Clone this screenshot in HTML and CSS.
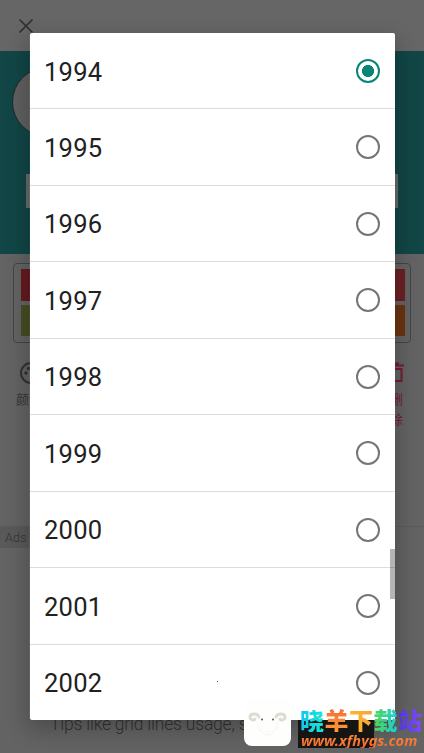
FILE: index.html
```
<!DOCTYPE html>
<html lang="zh">
<head>
<meta charset="utf-8">
<title>Year</title>
<link rel="stylesheet" href="styles.css">
</head>
<body>
<div class="screen">
  <main class="page">
    <header class="topbar">
      <svg class="close" viewBox="0 0 16 16"><path d="M1.500 1.500l13 13M14.500 1.500l-13 13"/></svg>
    </header>
    <section class="hero"><div class="avatar"></div><div class="field"></div></section>
    <section class="palette">
      <div class="swatch red"></div><div class="swatch crimson"></div>
      <div class="swatch olive"></div><div class="swatch brown"></div>
    </section>
    <nav class="tools">
      <div class="tool">
        <svg class="icon" viewBox="0 0 24 24"><path d="M12 2a10 10 0 0 0 0 20c2 0 3-1.500 2-3s0-3 2-3h3c2 0 3-2 3-4 0-6-5-10-10-10z"/><circle cx="7" cy="12" r=".8"/><circle cx="9.500" cy="7.500" r=".8"/><circle cx="15" cy="7.500" r=".8"/></svg>
        <span>颜色</span>
      </div>
      <div class="tool delete">
        <svg class="icon" viewBox="0 0 24 24"><path d="M1 4.500h17M4 2.500h9M3 8h12.500v12H3z"/></svg>
        <span>删<br>除</span>
      </div>
    </nav>
    <div class="ads">Ads</div>
    <p class="tips">Tips like grid lines usage, s</p>
  </main>

  <div class="dialog">
    <ul class="years">
      <li><span>1994</span><i class="radio on"></i></li>
      <li><span>1995</span><i class="radio"></i></li>
      <li><span>1996</span><i class="radio"></i></li>
      <li><span>1997</span><i class="radio"></i></li>
      <li><span>1998</span><i class="radio"></i></li>
      <li><span>1999</span><i class="radio"></i></li>
      <li><span>2000</span><i class="radio"></i></li>
      <li><span>2001</span><i class="radio"></i></li>
      <li><span>2002</span><i class="radio"></i></li>
    </ul>
    <div class="scrollbar"></div>
    <div class="speck"></div>
  </div>

  <div class="watermark">
    <svg class="sheep" viewBox="0 0 47 47">
      <rect width="47" height="47" rx="8" fill="#fefefd"/>
      <path d="M15 18c-1-4-9-4-9 0 0 3 4 4 5 2M32 18c1-4 9-4 9 0 0 3-4 4-5 2" fill="none" stroke="#dedbd2" stroke-width="2.800" stroke-linecap="round"/>
      <path d="M13 23c1 6 4 12 10 13 7-1 10-7 11-13M21 32l2.500 2 2.500-2" fill="none" stroke="#f2f1ed" stroke-width=".8"/>
      <circle cx="18" cy="20.500" r="1" fill="#555"/><circle cx="29" cy="20.500" r="1" fill="#555"/>
    </svg>
    <div class="brand">
      <div class="name"><b class="c1">晓</b><b class="c2">羊</b><b class="c3">下</b><b class="c4">载</b><b class="c5">站</b></div>
      <div class="site">www.xfhygs.com</div>
    </div>
  </div>
</div>
</body>
</html>
```

FILE: styles.css
```
* { box-sizing: border-box; }
body { margin: 0; font-family: Roboto, "Noto Sans CJK SC", sans-serif; }
.screen { position: relative; width: 424px; height: 753px; overflow: hidden; background: #636363; }
.page { display: flex; flex-direction: column; height: 753px; }
.topbar { height: 51px; padding: 18px 0 0 18px; background: #666; flex: none; }
.close { display: block; width: 16px; height: 16px; fill: none; stroke: #303030; stroke-width: 1.7; }
.hero { height: 203px; flex: none; padding: 16px 26px 0 12px; background: #124646; }
.avatar { width: 70px; height: 70px; border: 1px solid #202a2a; border-radius: 50%; background: #606060; }
.field { height: 34px; margin: 37px 0 0 14px; background: #626a6a; border: 1px solid #6c6c6c; }
.palette { display: grid; grid-template-columns: 1fr 1fr; grid-template-rows: 32px 31px; row-gap: 4px; height: 80px; flex: none; margin: 9px 13px 0; padding: 5px 5px 0 7px; border: 1px solid #424548; border-radius: 4px; }
.red { background: #641a20; }
.crimson { background: #6b2023; }
.olive { background: #464d24; }
.brown { background: #6a3410; }
.tools { display: flex; justify-content: space-between; height: 183px; flex: none; padding: 18px 13px 0 15px; }
.tool { display: flex; flex-direction: column; align-items: center; width: 28px; font-size: 13px; line-height: 20px; color: #363636; }
.delete { color: #751d31; width: 26px; }
.icon { width: 24px; height: 24px; fill: none; stroke: #333; stroke-width: 2; margin: 0 0 5px; }
.delete .icon { stroke: #751d31; }
.delete span { padding-right: 3px; }
.tool:first-child .icon { margin-left: 4px; }
.ads { width: 424px; height: 22px; flex: none; padding-left: 5px; border-top: 1px solid #5b5b5b; background: linear-gradient(90deg, #595959 30px, #636363 30px); color: #333; font-size: 12.5px; letter-spacing: .2px; font-weight: 300; line-height: 22px; }
.tips { margin: 165px 0 0 50px; color: #323232; font-size: 17.500px; line-height: 22px; font-weight: 300; letter-spacing: -.2px; white-space: nowrap; }

.dialog { position: absolute; left: 29.5px; top: 33px; width: 365px; height: 687px; overflow: hidden; border-radius: 2px; background: #fff; }
.screen::before { content: ""; position: absolute; left: 29px; top: 33px; width: 366px; height: 687px; border-radius: 3px; box-shadow: 0 8px 22px 2px rgba(0,0,0,.24); }
.years { list-style: none; margin: 0; padding: 0; }
.years li { display: flex; align-items: center; justify-content: space-between; height: 76.5px; padding: 1px 15px 0 14.500px; border-bottom: 1px solid #dcdcdc; font-size: 25.5px; letter-spacing: .25px; color: #212121; }
.years li:first-child { height: 76px; }
.years span { padding-top: 1.200px; }
.radio { display: block; width: 24px; height: 24px; border: 2.500px solid #757575; border-radius: 50%; }
.radio.on { border-color: #088577; background: radial-gradient(circle, #088577 5.700px, transparent 6.300px); }
.scrollbar { position: absolute; right: 0; top: 516px; width: 5px; height: 50px; background: rgba(0,0,0,.29); }
.speck { position: absolute; left: 187.5px; top: 648px; width: 1px; height: 1px; background: #555; }

.watermark { position: absolute; left: 244px; top: 699px; display: flex; gap: 7px; }
.sheep { width: 47px; height: 47px; }
.brand { width: 126px; height: 54px; background: linear-gradient(#171514, #171514) 0 21px / 76px 28px no-repeat; padding-top: 8px; }
.name { display: flex; margin-left: 2px; font: 700 24px/25px "Noto Sans CJK SC", sans-serif; }
.name b { flex: none; width: 24.5px; background-clip: text; -webkit-background-clip: text; color: transparent; }
.c1 { background-image: linear-gradient(90deg, #12c5f2, #19e8d1); }
.c2 { background-image: linear-gradient(#f46a38, #ff9b32); }
.c3 { background-image: linear-gradient(90deg, #ffb72d, #f8a331); }
.c4 { background-image: linear-gradient(90deg, #50d654, #18cfdb); }
.c5 { background-image: linear-gradient(90deg, #4d35e0, #854bff); }
.site { width: 124px; margin-left: 3px; font: italic 700 14.5px/16px "Noto Sans", sans-serif; letter-spacing: .05px; white-space: nowrap; color: transparent; background: linear-gradient(#ff9a3c, #f4652f); background-clip: text; -webkit-background-clip: text; }
```
